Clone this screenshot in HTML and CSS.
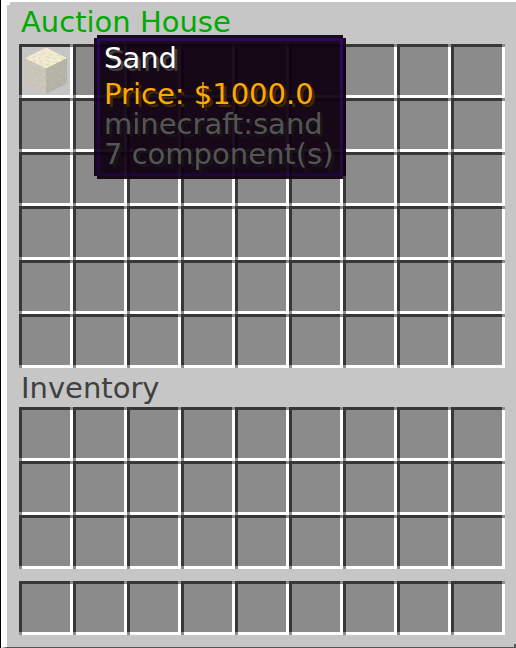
FILE: index.html
```
<!DOCTYPE html>
<html lang="en">
<head>
  <meta charset="UTF-8">
  <title>Auction House</title>
  <meta name="viewport" content="width=device-width, initial-scale=1.0">
  <link rel="stylesheet" href="styles.css">
</head>
<body>

  <main class="window">
    <h1 class="title">Auction House</h1>
    <div class="slots" id="chest" data-count="53">
      <div class="slot">
        <div class="item hovered">
          <svg class="block" viewBox="0 0 48 48" shape-rendering="crispEdges" role="img" aria-label="Sand block">
            <defs>
              <g id="grain">
                <path fill="#fff" opacity=".35" d="M1 0h2v1h-2zM6 1h3v1h-3zM12 0h1v2h-1zM3 3h2v1h-2zM9 4h1v1h-1zM13 4h3v1h-3zM0 6h2v1h-2zM5 6h1v2h-1zM10 7h3v1h-3zM2 9h3v1h-3zM7 9h2v1h-2zM14 9h1v2h-1zM0 12h1v1h-1zM4 12h3v1h-3zM10 11h2v1h-2zM8 14h2v1h-2zM13 14h2v1h-2zM2 15h2v1h-2z"/>
                <path fill="#8a7a4c" opacity=".14" d="M4 0h1v1h-1zM10 1h1v1h-1zM14 2h2v1h-2zM0 3h1v1h-1zM6 3h2v1h-2zM11 5h1v1h-1zM3 5h1v1h-1zM7 6h2v1h-2zM14 6h1v1h-1zM1 8h1v1h-1zM5 10h1v1h-1zM10 9h2v1h-2zM2 11h1v1h-1zM8 12h1v1h-1zM13 12h2v1h-2zM5 14h2v1h-2zM11 15h1v1h-1zM0 14h1v1h-1z"/>
              </g>
            </defs>
            <g transform="matrix(1.3125 .65625 -1.3125 .65625 24 0.5)">
              <rect width="16" height="16" fill="#f0e8cd"/>
              <use href="#grain"/>
            </g>
            <g transform="matrix(1.3125 .65625 0 1.59375 3 11)">
              <rect width="16" height="16" fill="#c9c6b9"/>
              <use href="#grain" opacity=".2"/>
            </g>
            <g transform="matrix(1.3125 -.65625 0 1.59375 24 21.5)">
              <rect width="16" height="16" fill="#b5b2a6"/>
              <use href="#grain" opacity=".2"/>
            </g>
          </svg>
        </div>
        <div class="tooltip" role="tooltip">
          <p class="name">Sand</p>
          <p class="price">Price: $1000.0</p>
          <p class="detail">minecraft:sand</p>
          <p class="detail">7 component(s)</p>
        </div>
      </div>
    </div>

    <h2 class="title inventory">Inventory</h2>
    <div class="slots" data-count="27"></div>
    <div class="slots hotbar" data-count="9"></div>
  </main>

  <script>
    // fill every grid up with empty slots
    document.querySelectorAll('.slots').forEach(grid => {
      for (let i = 0; i < Number(grid.dataset.count); i++) {
        const slot = document.createElement('div');
        slot.classList.add('slot');
        grid.appendChild(slot);
      }
    });
  </script>

</body>
</html>
```
FILE: styles.css
```
* {
  box-sizing: border-box;
}

body {
  margin: 0;
  padding-left: 1px;
  background: #000;
  font-family: "DejaVu Sans", Verdana, sans-serif;
  font-size: 29px;
  line-height: 30px;
}

.window {
  position: relative;
  padding: 5px 11px 12px 12px;
  background: #c6c6c6;
  border-top: 2px solid #fff;
  border-left: 6px solid #fff;
  border-bottom: 1px solid #555;
}

/* stepped corners of the window frame */
.window::before,
.window::after {
  content: '';
  position: absolute;
  width: 3px;
  height: 3px;
}

.window::before {
  top: 0;
  left: 0;
  background: #fff;
}

.window::after {
  right: 0;
  bottom: 0;
  width: 2px;
  background: #555;
}

.title {
  margin: 0 0 7px 2px;
  font-size: 29px;
  font-weight: normal;
  color: #0a0;
}

.inventory {
  margin-top: 5px;
  margin-bottom: 4px;
  color: #404040;
}

.slots {
  display: grid;
  grid-template-columns: repeat(9, 1fr);
}

.hotbar {
  margin-top: 12px;
}

.slot {
  position: relative;
  aspect-ratio: 1;
  padding: 3px;
  background:
    linear-gradient(#8b8b8b, #8b8b8b) top right / 3px 3px no-repeat,
    linear-gradient(#8b8b8b, #8b8b8b) bottom left / 3px 3px no-repeat,
    linear-gradient(#373737, #373737) top / 100% 3px no-repeat,
    linear-gradient(#373737, #373737) left / 3px 100% no-repeat,
    linear-gradient(#fff, #fff) bottom / 100% 3px no-repeat,
    linear-gradient(#fff, #fff) right / 3px 100% no-repeat,
    #8b8b8b;
}

.item {
  height: 100%;
}

.hovered {
  background: #c5c5c5;
}

.block {
  display: block;
  width: 100%;
  height: 100%;
}

.tooltip {
  position: absolute;
  z-index: 10;
  top: -6px;
  left: 78px;
  width: 246px;
  padding: 2px 3px 4px 4px;
  white-space: nowrap;
  background: rgba(16, 0, 16, 0.94);
  border: 3px solid;
  border-image: linear-gradient(rgba(80, 0, 255, 0.31), rgba(40, 0, 127, 0.31)) 3;
  box-shadow:
    0 -3px rgba(16, 0, 16, 0.94),
    0 3px rgba(16, 0, 16, 0.94),
    -3px 0 rgba(16, 0, 16, 0.94),
    3px 0 rgba(16, 0, 16, 0.94);
}

.tooltip p {
  margin: 0;
}

.tooltip .name {
  margin-bottom: 6px;
  color: #fff;
  text-shadow: 3px 3px #3f3f3f;
}

.price {
  color: #fa0;
  text-shadow: 3px 3px #3f2a00;
}

.detail {
  color: #555;
  text-shadow: 3px 3px #151515;
}
```
